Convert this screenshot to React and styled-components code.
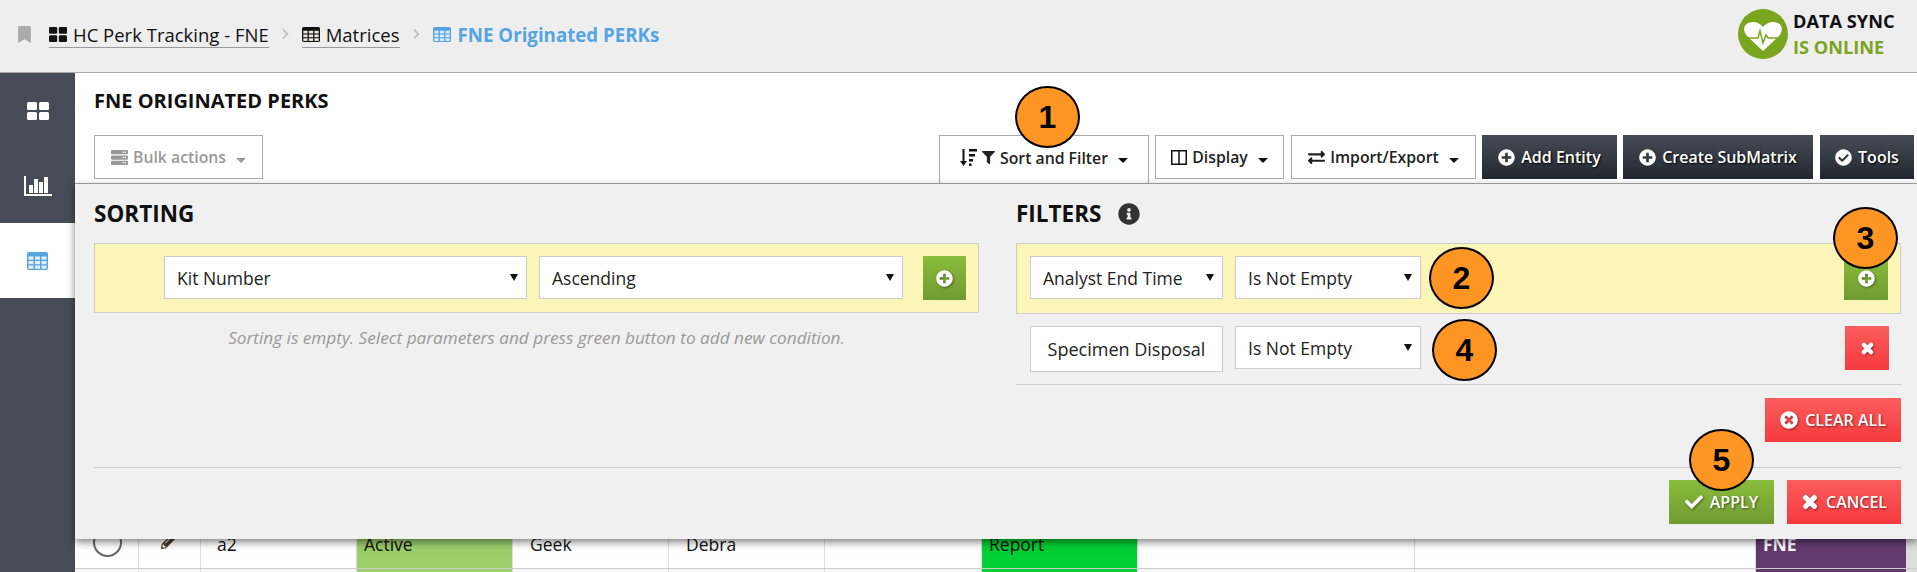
import React from 'react';
import styled, { createGlobalStyle } from 'styled-components';
import {
  FaBookmark, FaFilter, FaExchangeAlt, FaPlusCircle, FaCheckCircle, FaInfoCircle, FaTimes, FaTimesCircle,
  FaCheck, FaPencilAlt, FaServer, FaChevronRight,
} from 'react-icons/fa';

const Global = createGlobalStyle`
  html, body { margin: 0; padding: 0; background: #fff; }
  * { box-sizing: border-box; }
  body { font-family: "Open Sans", "Liberation Sans", sans-serif; color: #111; }
`;

const Page = styled.div`
  position: relative; width: 1917px; height: 572px; overflow: hidden; background: #fff;
`;
const TopBar = styled.header`
  height: 73px; background: #eee; border-bottom: 1px solid #aaa;
  display: flex; align-items: center; padding: 0 17px;
`;
const Mark = styled(FaBookmark)` color: #aaa; width: 15px; height: 17px; margin: 0 17px 4px 0; flex: none; `;
const Crumb = styled.a`
  display: flex; align-items: center; gap: 6px; font-size: 18.5px; color: #111; height: 26px;
  border-bottom: 1px solid #999; margin-bottom: 2px; white-space: nowrap;
`;
const Sep = styled(FaChevronRight)` width: 7px; height: 12px; color: #bbb; margin: 0 13px 4px; flex: none; `;
const Current = styled.span`
  display: flex; align-items: center; gap: 7px; font-size: 18.7px; font-weight: 700; color: #55a4e3; margin-bottom: 4px; white-space: nowrap;
`;
const Sync = styled.div` margin-left: auto; display: flex; align-items: center; gap: 5px; margin-bottom: 4px; `;
const SyncText = styled.div`
  font-size: 18.2px; font-weight: 700; line-height: 26px; color: #111; width: 107px; white-space: nowrap;
  span { display: block; color: #7aa51f; }
`;
const Body = styled.div` display: flex; height: 499px; `;
const Side = styled.nav` width: 75px; flex: none; background: #464c57; `;
const SideItem = styled.div`
  height: 75px; display: flex; align-items: center; justify-content: center;
  background: ${p => (p.$active ? '#fff' : 'transparent')};
`;
const Main = styled.main` flex: 1; min-width: 0; `;
const Head = styled.div`
  height: 111px; background: #fff; border-bottom: 1px solid #aaa; padding: 16px 3px 0 19px;
`;
const Title = styled.h1` margin: 0; font-size: 20px; font-weight: 700; line-height: 24px; color: #111; `;
const Tools = styled.div` display: flex; margin-top: 22px; align-items: flex-start; `;
const Outline = styled.button`
  height: ${p => (p.$tab ? '48px' : '44px')}; padding: ${p => (p.$tab ? '0 0 4px' : '0')}; background: #fff;
  border: 1px solid #aaa; ${p => p.$tab && 'border-bottom: none;'}
  width: ${p => p.$w}px; margin-left: ${p => p.$left || 0}px;
  font: 600 15.8px "Open Sans", sans-serif; color: ${p => (p.$muted ? '#999' : '#222')};
  display: flex; align-items: center; justify-content: center; gap: 5px; flex: none; white-space: nowrap;
`;
const Caret = styled.i`
  display: block; width: 0; height: 0; margin: 6px 0 0 5px; border: 5px solid transparent; border-bottom-width: 0;
  border-top-color: ${p => (p.$muted ? '#999' : '#111')};
`;
const Dark = styled.button`
  height: 44px; width: ${p => p.$w}px; margin-left: ${p => p.$left || 0}px; flex: none; border: none; padding: 0;
  background: linear-gradient(#464c57, #22262e); color: #fff; font: 600 16px "Open Sans", sans-serif; white-space: nowrap;
  text-shadow: 1px 1px 2px #000; display: flex; align-items: center; justify-content: center; gap: 6px;
  svg { width: 17px; height: 17px; }
`;
const Panel = styled.section`
  position: relative; z-index: 1; height: 355px; background: #f0f0f0; padding: 18px 16px 0 19px;
  box-shadow: 0 3px 8px rgba(0,0,0,.5);
`;
const Cols = styled.div` display: grid; grid-template-columns: 885px 885px; column-gap: 37px; height: 183px; `;
const H2 = styled.h2`
  margin: 0 0 17px; font-size: 22.5px; font-weight: 700; line-height: 24px; color: #111; display: flex; align-items: center; gap: 17px;
  svg { width: 22px; height: 22px; color: #333; }
`;
const NewRow = styled.div`
  height: ${p => p.$h}px; background: #fbf6b8; border: 1px solid #ccc;
  display: flex; align-items: flex-start; padding: 12px 12px 0 ${p => p.$pl}px;
`;
const SelWrap = styled.span`
  position: relative; display: block; flex: none; width: ${p => p.$w}px; margin-right: ${p => p.$gap}px;
  &::after {
    content: ""; position: absolute; right: 9px; top: 18px; width: 0; height: 0;
    border: 4px solid transparent; border-bottom-width: 0; border-top: 7px solid #111; pointer-events: none;
  }
`;
const Sel = styled.select`
  display: block; height: 43px; width: 100%; background: #fff; border: 1px solid #ccc; border-radius: 0; appearance: none;
  font: 17.5px "Open Sans", sans-serif; color: #222; padding: 0 12px;
`;
const Field = styled.div`
  height: 46px; width: 193px; margin-right: 12px; background: #fff; border: 1px solid #ccc; flex: none; white-space: nowrap;
  font-size: 18px; color: #222; display: flex; align-items: center; justify-content: center;
`;
const Sq = styled.button`
  height: 44px; width: ${p => p.$w}px; border: none; padding: 0; flex: none;
  background: ${p => (p.$red ? 'linear-gradient(#fb5d5d,#f63a3e)' : 'linear-gradient(#8abd3a,#6f9a32)')};
  color: #fff; display: flex; align-items: center; justify-content: center;
  svg { width: ${p => (p.$red ? 15 : 17)}px; height: ${p => (p.$red ? 15 : 17)}px; filter: drop-shadow(1px 1px 1px rgba(0,0,0,.4)); }
`;
const Hint = styled.p`
  margin: 13px 0 0; text-align: center; font-size: 17.2px; font-style: italic; color: #999; line-height: 24px; white-space: nowrap;
`;
const FilterRow = styled.div`
  height: 71px; border-bottom: 1px solid #ccc; display: flex; align-items: flex-start; padding: 12px 12px 0 14px;
`;
const RightEnd = styled.div` margin-left: auto; `;
const Action = styled.button`
  height: 44px; width: ${p => p.$w}px; border: none; padding: 0; flex: none; white-space: nowrap;
  background: ${p => (p.$green ? 'linear-gradient(#8abd3a,#6f9a32)' : 'linear-gradient(#fb5d5d,#f63a3e)')};
  color: #fff; font: 600 16px "Open Sans", sans-serif; text-shadow: 1px 1px 2px rgba(0,0,0,.5);
  display: flex; align-items: center; justify-content: center; gap: 7px;
  svg { width: 18px; height: 18px; filter: drop-shadow(1px 1px 1px rgba(0,0,0,.4)); }
`;
const BoldX = styled(FaTimes)` stroke: currentColor; stroke-width: 50; `;
const ClearLine = styled.div` display: flex; justify-content: flex-end; margin-top: 13px; `;
const Rule = styled.div` height: 1px; background: #ccc; margin-top: 25px; `;
const Foot = styled.div` display: flex; justify-content: flex-end; gap: 13px; margin-top: 12px; `;
const Table = styled.div` margin-top: -19px; `;
const TRow = styled.div`
  display: grid; height: ${p => p.$h}px; background: ${p => p.$bg};
  grid-template-columns: 64px 62px 156px 156px 156px 156px 157px 156px 277px 341px 151px 10px;
  border-bottom: ${p => (p.$first ? '1px solid #ccc' : 'none')};
`;
const Cell = styled.div`
  border-right: 1px solid #ddd; background: ${p => p.$bg || 'transparent'}; color: ${p => p.$fg || '#111'};
  font-size: 17.5px; font-weight: ${p => (p.$bold ? 700 : 400)}; padding: 12px 0 0 ${p => p.$pl ?? 16}px; line-height: 24px;
  display: flex; align-items: flex-start;
`;
const Radio = styled.span`
  width: 29px; height: 29px; border: 2px solid #666; border-radius: 50%; display: block; margin-top: -4px; flex: none;
`;
const Badge = styled.div`
  position: absolute; left: ${p => p.$x}px; top: ${p => p.$y}px; width: 65px; height: 62px; border-radius: 50%;
  background: #ff9522; border: 2px solid #000; z-index: 5;
  display: flex; align-items: center; justify-content: center;
  font: 700 32px "Liberation Sans", Arial, sans-serif; color: #000;
`;

const Grid2 = ({ w, h, color }) => (
  <svg width={w} height={h} viewBox="0 0 22 18" preserveAspectRatio="none" style={{ flex: 'none' }}>
    <g fill={color}>
      <rect x="0" y="0" width="10" height="8" rx="1.5" />
      <rect x="12" y="0" width="10" height="8" rx="1.5" />
      <rect x="0" y="10" width="10" height="8" rx="1.5" />
      <rect x="12" y="10" width="10" height="8" rx="1.5" />
    </g>
  </svg>
);
const TableGlyph = ({ w, h, color, cell }) => (
  <svg width={w} height={h} viewBox="0 0 21 18" preserveAspectRatio="none" style={{ flex: 'none' }}>
    <rect width="21" height="18" rx="2" fill={color} />
    <g fill={cell}>
      {[4.5, 9, 13.5].map(y => [1.5, 8, 14.5].map(x => <rect key={`${x}-${y}`} x={x} y={y} width="5" height="3.2" />))}
    </g>
  </svg>
);
const ChartGlyph = () => (
  <svg width="28" height="20" viewBox="0 0 28 20">
    <g fill="#fff">
      <rect x="0" y="0" width="2" height="20" />
      <rect x="0" y="18" width="28" height="2" />
      <rect x="5" y="9" width="4" height="8" />
      <rect x="10" y="3" width="4" height="14" />
      <rect x="15" y="6" width="4" height="11" />
      <rect x="20" y="1" width="4" height="16" />
    </g>
  </svg>
);
const SortGlyph = () => (
  <svg width="17" height="17" viewBox="0 0 17 17" style={{ flex: 'none' }}>
    <g fill="#111">
      <path d="M2.5 0h2v12h2.500l-3.500 5-3.500-5h2.500z" />
      <rect x="9" y="0" width="8" height="2.500" />
      <rect x="9" y="5" width="6" height="2.500" />
      <rect x="9" y="10" width="4" height="2.500" />
      <rect x="9" y="14.500" width="2.500" height="2.500" />
    </g>
  </svg>
);
const ColumnsGlyph = () => (
  <svg width="16" height="15" viewBox="0 0 16 15" style={{ flex: 'none' }}>
    <path d="M.75.75h14.500v13.500H.75zM8 .75v13.500" fill="none" stroke="#111" strokeWidth="1.500" />
  </svg>
);
const Heart = () => (
  <svg width="50" height="50" viewBox="0 0 50 50" style={{ flex: 'none' }}>
    <circle cx="25" cy="25" r="25" fill="#7aa51f" />
    <path d="M25 42 L9 27 C3 20 7 13 15 13 C19 13 23 15 25 18 C27 15 31 13 35 13 C43 13 47 20 41 27 Z" fill="#fff" />
    <path d="M7 29 H20 L22 22 L25 34 L28 26 L30 29 H43" fill="none" stroke="#7aa51f" strokeWidth="1.500" />
  </svg>
);

const colored = { active: '#9ccf6a', report: '#00cf35', fne: '#623a6e' };

export default function App() {
  return (
    <Page>
      <Global />
      <TopBar>
        <Mark />
        <Crumb><Grid2 w={18} h={15} color="#111" />HC Perk Tracking - FNE</Crumb>
        <Sep />
        <Crumb><TableGlyph w={18} h={15} color="#111" cell="#e8e8e0" />Matrices</Crumb>
        <Sep />
        <Current><TableGlyph w={18} h={15} color="#55a4e3" cell="#dbe9f5" />FNE Originated PERKs</Current>
        <Sync>
          <Heart />
          <SyncText>DATA SYNC<span>IS ONLINE</span></SyncText>
        </Sync>
      </TopBar>
      <Body>
        <Side>
          <SideItem><Grid2 w={22} h={18} color="#fff" /></SideItem>
          <SideItem><ChartGlyph /></SideItem>
          <SideItem $active><TableGlyph w={21} h={18} color="#55a4e3" cell="#e3eefa" /></SideItem>
        </Side>
        <Main>
          <Head>
            <Title>FNE ORIGINATED PERKS</Title>
            <Tools>
              <Outline $w={169} $muted><FaServer size={17} />Bulk actions<Caret $muted /></Outline>
              <Outline $w={210} $tab $left={676}><SortGlyph /><FaFilter size={13} />Sort and Filter<Caret /></Outline>
              <Outline $w={129} $left={6}><ColumnsGlyph />Display<Caret /></Outline>
              <Outline $w={185} $left={7}><FaExchangeAlt size={17} />Import/Export<Caret /></Outline>
              <Dark $w={135} $left={6}><FaPlusCircle />Add Entity</Dark>
              <Dark $w={190} $left={6}><FaPlusCircle />Create SubMatrix</Dark>
              <Dark $w={94} $left={7}><FaCheckCircle />Tools</Dark>
            </Tools>
          </Head>
          <Panel>
            <Cols>
              <div>
                <H2>SORTING</H2>
                <NewRow $h={70} $pl={69}>
                  <SelWrap $w={363} $gap={12}><Sel defaultValue="Kit Number"><option>Kit Number</option></Sel></SelWrap>
                  <SelWrap $w={364} $gap={20}><Sel defaultValue="Ascending"><option>Ascending</option></Sel></SelWrap>
                  <Sq $w={43}><FaPlusCircle /></Sq>
                </NewRow>
                <Hint>Sorting is empty. Select parameters and press green button to add new condition.</Hint>
              </div>
              <div>
                <H2>FILTERS <FaInfoCircle /></H2>
                <NewRow $h={71} $pl={13}>
                  <SelWrap $w={193} $gap={12}><Sel><option>Analyst End Time</option></Sel></SelWrap>
                  <SelWrap $w={186} $gap={0}><Sel><option>Is Not Empty</option></Sel></SelWrap>
                  <RightEnd><Sq $w={44}><FaPlusCircle /></Sq></RightEnd>
                </NewRow>
                <FilterRow>
                  <Field>Specimen Disposal</Field>
                  <SelWrap $w={186} $gap={0}><Sel><option>Is Not Empty</option></Sel></SelWrap>
                  <RightEnd><Sq $w={44} $red><BoldX /></Sq></RightEnd>
                </FilterRow>
              </div>
            </Cols>
            <ClearLine><Action $w={136}><FaTimesCircle />CLEAR ALL</Action></ClearLine>
            <Rule />
            <Foot>
              <Action $w={105} $green><FaCheck />APPLY</Action>
              <Action $w={114}><BoldX />CANCEL</Action>
            </Foot>
          </Panel>
          <Table>
            <TRow $h={49} $bg="#fff" $first>
              <Cell $pl={18}><Radio /></Cell>
              <Cell $pl={22}><FaPencilAlt size={17} color="#4a3b2e" /></Cell>
              <Cell>a2</Cell>
              <Cell $bg={colored.active} $pl={7}>Active</Cell>
              <Cell $pl={17}>Geek</Cell>
              <Cell $pl={17}>Debra</Cell>
              <Cell />
              <Cell $bg={colored.report} $pl={7}>Report</Cell>
              <Cell />
              <Cell />
              <Cell $bg={colored.fne} $fg="#fff" $bold $pl={7}>FNE</Cell>
              <Cell $bg="#ddd" />
            </TRow>
            <TRow $h={10} $bg="#f7f7f7">
              <Cell /><Cell /><Cell /><Cell $bg={colored.active} /><Cell /><Cell /><Cell /><Cell $bg={colored.report} /><Cell /><Cell /><Cell $bg={colored.fne} /><Cell $bg="#ddd" />
            </TRow>
          </Table>
        </Main>
      </Body>
      <Badge $x={1015} $y={86}>1</Badge>
      <Badge $x={1429} $y={247}>2</Badge>
      <Badge $x={1833} $y={207}>3</Badge>
      <Badge $x={1432} $y={319}>4</Badge>
      <Badge $x={1689} $y={429}>5</Badge>
    </Page>
  );
}
